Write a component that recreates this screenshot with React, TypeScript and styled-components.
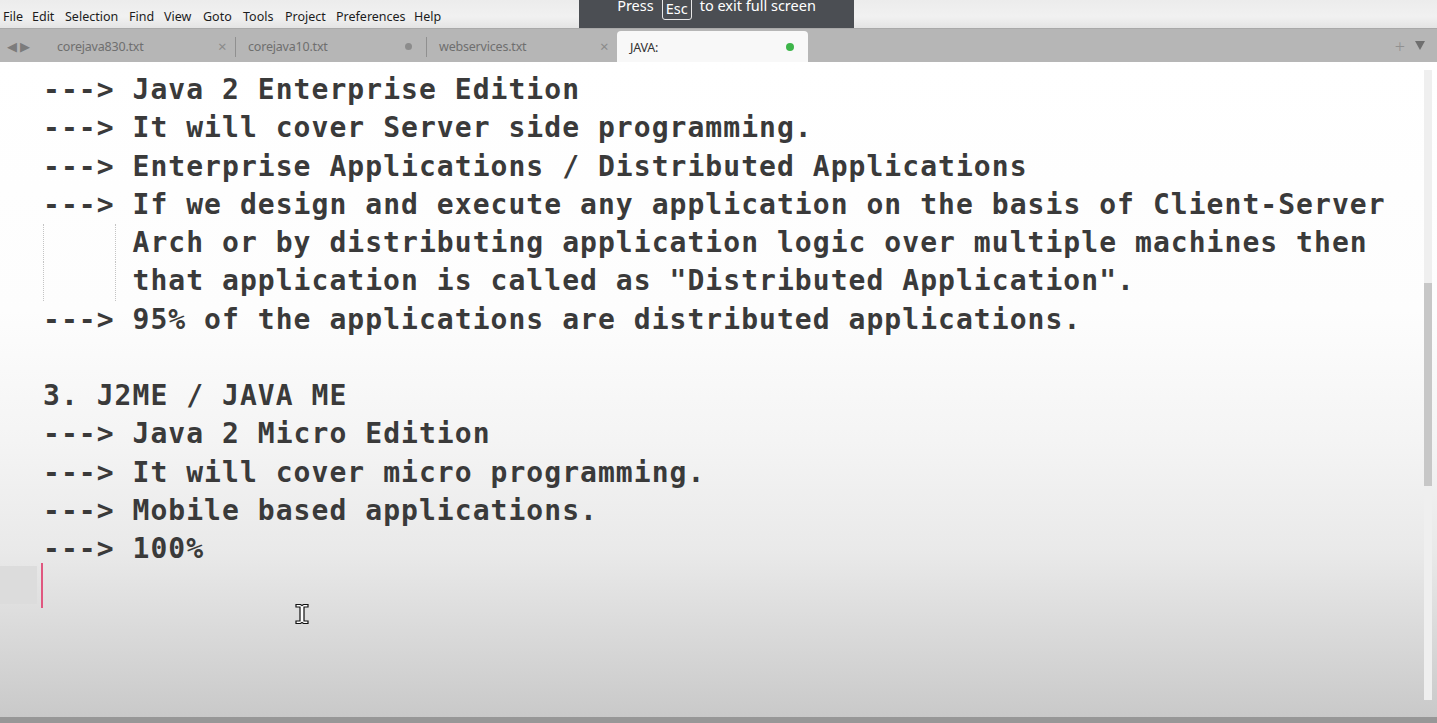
import React from "react";
import styled, { createGlobalStyle } from "styled-components";

const Global = createGlobalStyle`
  html, body { margin: 0; padding: 0; }
  body { width: 1437px; height: 723px; overflow: hidden; background: #cfcfcf; }
  #root { width: 1437px; height: 723px; }
`;

const CELL = 17.9;
const LINE = 38.25;

const Window = styled.div`
  position: relative;
  width: 1437px;
  height: 723px;
  display: flex;
  flex-direction: column;
  font-family: "Noto Sans", "Open Sans", sans-serif;
  overflow: hidden;
`;

const MenuBar = styled.div`
  height: 28px;
  flex: none;
  display: flex;
  align-items: center;
  padding-top: 4px;
  box-sizing: border-box;
  background: linear-gradient(to bottom, #ececec, #f1f1f1 60%, #e4e4e4);
`;

const MenuItem = styled.div<{ $w: number }>`
  width: ${(p) => p.$w}px;
  flex: none;
  font-size: 12.5px;
  color: #1c1c1c;
  white-space: nowrap;
`;

const MenuLead = styled.div`
  width: 3px;
  flex: none;
`;

const TabBar = styled.div`
  height: 34px;
  flex: none;
  display: flex;
  align-items: flex-end;
  background: #b6b6b6;
  border-top: 1px solid #a9a9a9;
  box-sizing: border-box;
`;

const NavArrows = styled.div`
  width: 40px;
  height: 33px;
  flex: none;
  display: flex;
  align-items: center;
  gap: 3px;
  padding-left: 7px;
  box-sizing: border-box;
  color: #7c7c7c;
  font-size: 13px;
`;

const Tab = styled.div<{ $w: number; $active?: boolean; $pad: number }>`
  width: ${(p) => p.$w}px;
  height: ${(p) => (p.$active ? 31 : 33)}px;
  flex: none;
  display: flex;
  align-items: center;
  padding-left: ${(p) => p.$pad}px;
  padding-top: 1px;
  box-sizing: border-box;
  background: ${(p) => (p.$active ? "#f8f8f8" : "transparent")};
  border-radius: ${(p) => (p.$active ? "4px 4px 0 0" : "0")};
  font-size: 12.5px;
  color: ${(p) => (p.$active ? "#333333" : "#6f6f6f")};
  position: relative;
  letter-spacing: -0.2px;
`;

const TabLabel = styled.span`
  flex: 1;
  white-space: nowrap;
`;

const TabClose = styled.span`
  width: 17px;
  flex: none;
  font-size: 15px;
  color: #8a8a8a;
`;

const TabDot = styled.span<{ $color: string; $size: number }>`
  width: ${(p) => p.$size}px;
  height: ${(p) => p.$size}px;
  border-radius: 50%;
  background: ${(p) => p.$color};
  flex: none;
  margin-right: ${(p) => 18 - p.$size / 2}px;
`;

const TabSep = styled.div`
  width: 1px;
  height: 20px;
  background: #909090;
  flex: none;
  align-self: center;
  margin-top: 2px;
`;

const TabSpacer = styled.div`
  flex: 1;
`;

const TabTools = styled.div`
  height: 33px;
  display: flex;
  align-items: center;
  gap: 10px;
  padding-right: 12px;
  color: #8c8c8c;
`;

const Plus = styled.span`
  font-size: 18px;
  font-weight: 300;
  color: #909090;
`;

const Down = styled.span`
  width: 0;
  height: 0;
  border-left: 5.5px solid transparent;
  border-right: 5.5px solid transparent;
  border-top: 9px solid #6f6f6f;
`;

const Editor = styled.div`
  position: relative;
  flex: 1;
  display: flex;
  background: linear-gradient(
    to bottom,
    #ffffff 0%,
    #fdfdfd 38%,
    #f4f4f4 58%,
    #e9e9e9 75%,
    #d6d6d6 90%,
    #c9c9c9 100%
  );
`;

const Lines = styled.div`
  flex: 1;
  padding-top: 9px;
  display: flex;
  flex-direction: column;
`;

const Row = styled.div`
  height: ${LINE}px;
  display: flex;
  flex: none;
`;

const Gutter = styled.div<{ $current?: boolean }>`
  width: 37px;
  flex: none;
  margin-top: ${(p) => (p.$current ? "-2px" : "0")};
  height: ${(p) => (p.$current ? "38px" : "auto")};
  background: ${(p) => (p.$current ? "#dcdcdc" : "transparent")};
`;

const Code = styled.div<{ $wrap?: boolean }>`
  position: relative;
  flex: 1;
  padding-left: ${(p) => (p.$wrap ? 6 + CELL * 5 : 6)}px;
  font-family: "DejaVu Sans Mono", "Liberation Mono", monospace;
  font-weight: bold;
  font-size: 28px;
  letter-spacing: ${CELL - 28 * 0.602}px;
  line-height: ${LINE}px;
  color: #3a3a3a;
  white-space: pre;
  ${(p) =>
    p.$wrap
      ? `
    &::before, &::after {
      content: "";
      position: absolute;
      top: 0;
      bottom: 0;
      border-left: 1px dotted #c4c4c4;
    }
    &::before { left: 6px; }
    &::after { left: ${6 + CELL * 4}px; }
  `
      : ""}
`;

const Caret = styled.span`
  position: absolute;
  left: 4px;
  top: -5px;
  width: 2px;
  height: 45px;
  background: #e0577f;
`;

const ScrollTrack = styled.div`
  width: 8px;
  flex: none;
  margin: 8px 5px 17px 0;
  background: #efefef;
  display: flex;
  flex-direction: column;
`;

const ScrollThumb = styled.div`
  margin-top: 213px;
  height: 203px;
  background: #c7c7c7;
`;

const BottomBar = styled.div`
  height: 6px;
  flex: none;
  background: #979797;
`;

const Toast = styled.div`
  position: absolute;
  top: 0;
  left: 579px;
  width: 275px;
  height: 28px;
  background: #4b4e53;
  color: #ffffff;
  font-family: "Noto Sans", "Open Sans", sans-serif;
  font-size: 14.5px;
  display: flex;
  align-items: flex-start;
  justify-content: center;
  gap: 8px;
  box-sizing: border-box;
`;

const ToastText = styled.span`
  margin-top: -5px;
  line-height: 20px;
`;

const Key = styled.span`
  margin-top: -3px;
  padding: 0 3px;
  height: 23px;
  line-height: 20px;
  border: 1px solid #e8e8e8;
  border-radius: 3px;
  box-sizing: border-box;
`;

const Pointer = styled.svg`
  position: absolute;
  left: 295px;
  top: 541px;
`;

const menus: [string, number][] = [
  ["File", 29],
  ["Edit", 33],
  ["Selection", 64],
  ["Find", 35],
  ["View", 39],
  ["Goto", 40],
  ["Tools", 42],
  ["Project", 51],
  ["Preferences", 78],
  ["Help", 40],
];

type Line = { text: string; wrap?: boolean };

const lines: Line[] = [
  { text: "---> Java 2 Enterprise Edition" },
  { text: "---> It will cover Server side programming." },
  { text: "---> Enterprise Applications / Distributed Applications" },
  { text: "---> If we design and execute any application on the basis of Client-Server" },
  { text: "Arch or by distributing application logic over multiple machines then", wrap: true },
  { text: 'that application is called as "Distributed Application".', wrap: true },
  { text: "---> 95% of the applications are distributed applications." },
  { text: "" },
  { text: "3. J2ME / JAVA ME" },
  { text: "---> Java 2 Micro Edition" },
  { text: "---> It will cover micro programming." },
  { text: "---> Mobile based applications." },
  { text: "---> 100%" },
];

export default function App() {
  return (
    <>
      <Global />
      <Window>
        <MenuBar>
          <MenuLead />
          {menus.map(([m, w]) => (
            <MenuItem key={m} $w={w}>
              {m}
            </MenuItem>
          ))}
        </MenuBar>
        <TabBar>
          <NavArrows>
            <span>◀</span>
            <span>▶</span>
          </NavArrows>
          <Tab $w={195} $pad={17}>
            <TabLabel>corejava830.txt</TabLabel>
            <TabClose>×</TabClose>
          </Tab>
          <TabSep />
          <Tab $w={190} $pad={12}>
            <TabLabel>corejava10.txt</TabLabel>
            <TabDot $color="#8c8c8c" $size={7} />
          </Tab>
          <TabSep />
          <Tab $w={190} $pad={12}>
            <TabLabel>webservices.txt</TabLabel>
            <TabClose>×</TabClose>
          </Tab>
          <Tab $w={191} $pad={13} $active>
            <TabLabel>JAVA:</TabLabel>
            <TabDot $color="#3db54a" $size={8} />
          </Tab>
          <TabSpacer />
          <TabTools>
            <Plus>+</Plus>
            <Down />
          </TabTools>
        </TabBar>
        <Editor>
          <Lines>
            {lines.map((l, i) => (
              <Row key={i}>
                <Gutter />
                <Code $wrap={l.wrap}>{l.text}</Code>
              </Row>
            ))}
            <Row>
              <Gutter $current />
              <Code>
                <Caret />
              </Code>
            </Row>
          </Lines>
          <ScrollTrack>
            <ScrollThumb />
          </ScrollTrack>
          <Pointer width="14" height="22" viewBox="0 0 14 22">
            <path
              d="M1 1.5h4.5l1.5 1 1.5-1H13v2.5H9v14h4v2.5H8.5l-1.5-1-1.5 1H1V18h4V4H1z"
              fill="#ffffff"
              stroke="#111111"
              strokeWidth="1.2"
            />
          </Pointer>
        </Editor>
        <BottomBar />
        <Toast>
          <ToastText>Press</ToastText>
          <Key>Esc</Key>
          <ToastText>to exit full screen</ToastText>
        </Toast>
      </Window>
    </>
  );
}
